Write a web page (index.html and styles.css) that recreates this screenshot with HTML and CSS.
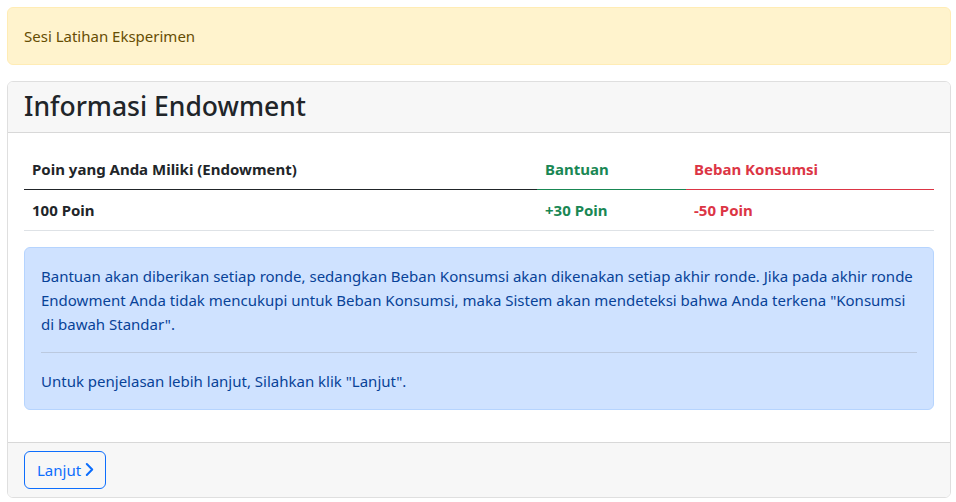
FILE: index.html
```html
<!DOCTYPE html>
<html lang="id">
<head>
<meta charset="utf-8">
<title>Informasi Endowment</title>
<link rel="stylesheet" href="styles.css">
</head>
<body>
<div class="alert alert-warning">Sesi Latihan Eksperimen</div>
<div class="card">
  <div class="card-header"><h3 class="title">Informasi Endowment</h3></div>
  <div class="card-body">
    <table class="table">
      <thead>
        <tr>
          <th class="c1">Poin yang Anda Miliki (Endowment)</th>
          <th class="c2 green">Bantuan</th>
          <th class="c3 red">Beban Konsumsi</th>
        </tr>
      </thead>
      <tbody>
        <tr>
          <td class="bold">100 Poin</td>
          <td class="bold green">+30 Poin</td>
          <td class="bold red">-50 Poin</td>
        </tr>
      </tbody>
    </table>
    <div class="alert alert-info">
      <p class="mb0">Bantuan akan diberikan setiap ronde, sedangkan Beban Konsumsi akan dikenakan setiap akhir ronde. Jika pada akhir ronde Endowment Anda tidak mencukupi untuk Beban Konsumsi, maka Sistem akan mendeteksi bahwa Anda terkena "Konsumsi di bawah Standar".</p>
      <hr class="divider">
      <p class="mb0">Untuk penjelasan lebih lanjut, Silahkan klik "Lanjut".</p>
    </div>
  </div>
  <div class="card-footer">
    <button class="btn" type="button">Lanjut <svg class="chev" viewBox="0 0 10 16" width="9" height="15" aria-hidden="true"><polyline points="2,2 8,8 2,14" fill="none" stroke="currentColor" stroke-width="2.3" stroke-linecap="round" stroke-linejoin="round"/></svg></button>
  </div>
</div>
</body>
</html>
```
FILE: styles.css
```css
* { box-sizing: border-box; }
body {
  margin: 7px 5px 0 7px;
  font-family: "Noto Sans", "Open Sans", sans-serif;
  font-size: 15px;
  line-height: 24px;
  color: #212529;
  background: #fff;
}
.alert {
  padding: 16px;
  margin-bottom: 16px;
  border: 1px solid transparent;
  border-radius: 6px;
}
.alert-warning {
  color: #664d03;
  background: #fff3cd;
  border-color: #ffecb5;
}
.alert-info {
  color: #084298;
  background: #cfe2ff;
  border-color: #b6d4fe;
}
.card {
  border: 1px solid rgba(0,0,0,.125);
  border-radius: 6px;
  overflow: hidden;
}
.card-header {
  padding: 8px 16px;
  background: #f7f7f7;
  border-bottom: 1px solid rgba(0,0,0,.125);
}
.title {
  margin: 0;
  font-size: 26.5px;
  line-height: 33.6px;
  font-weight: 500;
}
.card-body { padding: 16px; }
.table {
  width: 100%;
  border-collapse: collapse;
  margin-bottom: 16px;
}
.table th, .table td {
  padding: 8px;
  text-align: left;
  font-weight: 700;
}
.table th { border-bottom: 1px solid currentColor; }
.table td { border-bottom: 1px solid #dee2e6; }
.c1 { width: 513px; }
.c2 { width: 149px; }
.green { color: #198754; }
.red { color: #dc3545; }
.mb0 { margin: 0; }
.divider {
  margin: 16px 0;
  border: 0;
  border-top: 1px solid currentColor;
  opacity: .25;
}
.card-footer {
  padding: 8px 16px;
  background: #f7f7f7;
  border-top: 1px solid rgba(0,0,0,.125);
}
.btn {
  display: inline-flex;
  align-items: center;
  gap: 4px;
  height: 38px;
  padding: 6px 11px 6px 12px;
  font-family: inherit;
  font-size: 15px;
  line-height: 24px;
  color: #0d6efd;
  background: transparent;
  border: 1px solid #0d6efd;
  border-radius: 6px;
}
.chev { display: block; }
```
